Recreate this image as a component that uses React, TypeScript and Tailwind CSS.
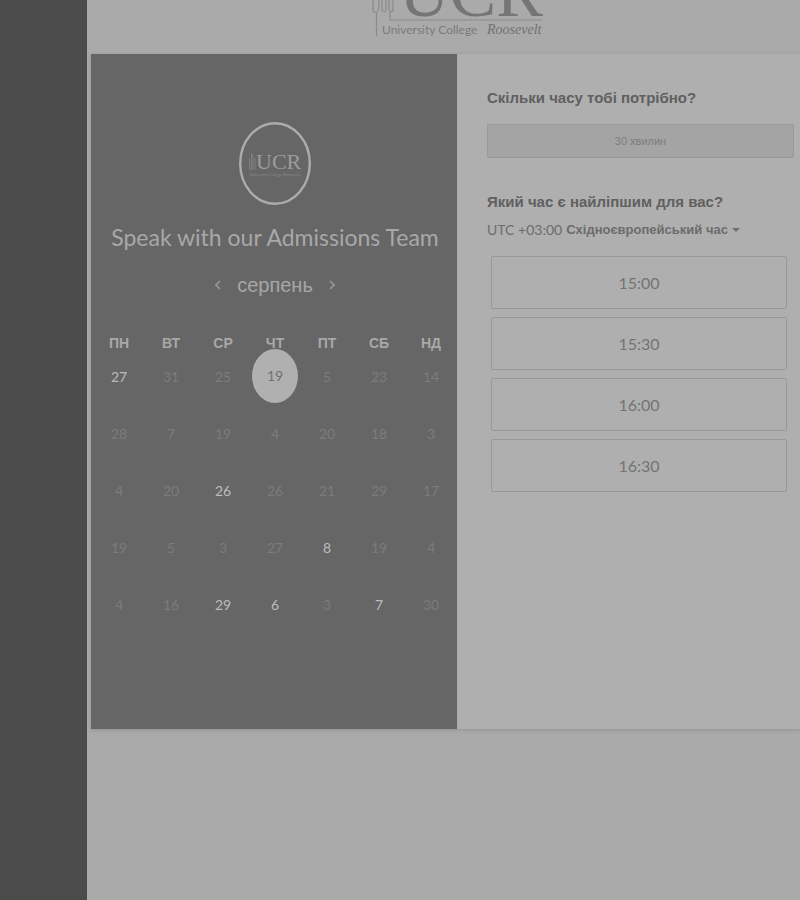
import React from "react";

const latin = "font-['Lato','Liberation_Sans',sans-serif]";
const cyrillic = "font-['Liberation_Sans',Arial,sans-serif]";

const weekdays = ["ПН", "ВТ", "СР", "ЧТ", "ПТ", "СБ", "НД"];

type Day = { n: number; state?: "open" | "selected" };

const weeks: Day[][] = [
  [{ n: 27, state: "open" }, { n: 31 }, { n: 25 }, { n: 19, state: "selected" }, { n: 5 }, { n: 23 }, { n: 14 }],
  [{ n: 28 }, { n: 7 }, { n: 19 }, { n: 4 }, { n: 20 }, { n: 18 }, { n: 3 }],
  [{ n: 4 }, { n: 20 }, { n: 26, state: "open" }, { n: 26 }, { n: 21 }, { n: 29 }, { n: 17 }],
  [{ n: 19 }, { n: 5 }, { n: 3 }, { n: 27 }, { n: 8, state: "open" }, { n: 19 }, { n: 4 }],
  [{ n: 4 }, { n: 16 }, { n: 29, state: "open" }, { n: 6, state: "open" }, { n: 3 }, { n: 7, state: "open" }, { n: 30 }],
];

const slots = ["15:00", "15:30", "16:00", "16:30"];

function HeaderLogo() {
  return (
    <svg width="176" height="53" viewBox="0 0 176 53" role="img" aria-label="University College Roosevelt">
      <g fill="none" stroke="#8a8a8a" strokeWidth="1.2">
        <path d="M5.5 36V13M2 0V10Q2 13 6 12Q8 11 8 0M11 0V10Q14 14 15 10V0M18 0V9Q19 13 22 11V0" />
        <path d="M19 12V20H171" />
      </g>
      <text x="28" y="16" fontSize="70" fill="#757575" fontFamily="'Liberation Serif', serif">UCR</text>
      <text x="11" y="34" fontSize="12" fill="#7b7b7b" fontFamily="Lato, sans-serif">University College</text>
      <text x="116" y="34" fontSize="14" fill="#707070" fontStyle="italic" fontFamily="'Liberation Serif', serif">Roosevelt</text>
    </svg>
  );
}

function Emblem() {
  return (
    <svg width="72" height="83" viewBox="0 0 72 83" role="img" aria-label="UCR" className="mx-auto block">
      <ellipse cx="36" cy="41.5" rx="34.8" ry="40.3" fill="none" stroke="#acacac" strokeWidth="2.4" />
      <path d="M10.500 48V36M12.500 48V31L14 35V48M16 48V36" fill="none" stroke="#7e7e7e" />
      <text x="17" y="47" fontSize="22" fill="#9c9c9c" fontFamily="'Liberation Serif', serif">UCR</text>
      <text x="11" y="54" fontSize="4" fill="#8a8a8a" fontFamily="Lato, sans-serif">University College Roosevelt</text>
    </svg>
  );
}

function Chevron({ d }: { d: string }) {
  return (
    <svg width="6" height="12" viewBox="0 0 6 12" fill="none" stroke="#979797" strokeWidth="1.6" aria-hidden="true">
      <path d={d} />
    </svg>
  );
}

function DayButton({ day }: { day: Day }) {
  if (day.state === "selected") {
    return (
      <button aria-pressed="true" className="mx-auto block h-[54px] w-[46px] rounded-[50%] bg-[#b0b0b0] text-[#707070]">
        {day.n}
      </button>
    );
  }
  if (day.state === "open") {
    return <button className="h-14 w-full text-[#bcbcbc]">{day.n}</button>;
  }
  return (
    <button disabled className="h-14 w-full text-[#7c7c7c]">
      {day.n}
    </button>
  );
}

function CalendarPanel() {
  return (
    <section className="w-[366px] shrink-0 bg-[#666666] pt-[68px] pb-10 pl-[2px]">
      <Emblem />
      <h1 className={`${latin} mt-4 text-center text-[23px] leading-8 whitespace-nowrap text-[#a8a8a8]`}>
        Speak with our Admissions Team
      </h1>
      <div className="mt-4 flex h-8 items-center justify-center gap-4">
        <button aria-label="Попередній місяць">
          <Chevron d="M5 2L1 6L5 10" />
        </button>
        <h2 className={`${cyrillic} text-xl leading-8 text-[#a6a6a6]`}>серпень</h2>
        <button aria-label="Наступний місяць">
          <Chevron d="M1 2L5 6L1 10" />
        </button>
      </div>
      <table className="mt-7 w-full table-fixed border-collapse text-center">
        <thead>
          <tr className={`${cyrillic} h-5 text-sm text-[#a8a8a8]`}>
            {weekdays.map((name) => (
              <th key={name} scope="col" className="p-0 pt-2 leading-3">
                {name}
              </th>
            ))}
          </tr>
        </thead>
        <tbody className={`${latin} text-sm`}>
          {weeks.map((week, i) => (
            <tr key={i} className="h-[57px]">
              {week.map((day, j) => (
                <td key={j} className="p-0 align-top">
                  <DayButton day={day} />
                </td>
              ))}
            </tr>
          ))}
        </tbody>
      </table>
    </section>
  );
}

function TimePanel() {
  return (
    <section className="min-w-0 flex-1 bg-[#afafaf] pt-8 pr-[6px] pl-[30px]">
      <h2 className={`${cyrillic} text-[15px] leading-6 font-bold text-[#606060]`}>Скільки часу тобі потрібно?</h2>
      <button
        className={`${cyrillic} mt-[14px] block h-[34px] w-full rounded-xs border border-[#999999] bg-[#a4a4a4] text-[11px] text-[#7c7c7c]`}
      >
        30 хвилин
      </button>
      <h2 className={`${cyrillic} mt-8 text-[15px] leading-6 font-bold text-[#606060]`}>
        Який час є найліпшим для вас?
      </h2>
      <div className="mt-1 flex h-6 items-center gap-1 text-sm text-[#6c6c6c]">
        <label htmlFor="zone" className={`${latin} whitespace-nowrap`}>
          UTC +03:00
        </label>
        <select id="zone" className={`${cyrillic} appearance-none bg-transparent pr-4 text-[13px] font-bold`}>
          <option>Східноєвропейський час</option>
        </select>
        <svg width="8" height="4" viewBox="0 0 8 4" fill="#707070" className="pointer-events-none -ml-4" aria-hidden="true">
          <path d="M0 0H8L4 4Z" />
        </svg>
      </div>
      <div className="mt-[14px] mr-[7px] ml-1 flex flex-col gap-2">
        {slots.map((slot) => (
          <button key={slot} className={`${latin} h-[53px] rounded-xs border border-[#999999] text-base text-[#747474]`}>
            {slot}
          </button>
        ))}
      </div>
    </section>
  );
}

export default function App() {
  return (
    <div className="flex min-h-screen bg-[#aaaaaa]">
      <aside className="w-[87px] shrink-0 bg-[#4b4b4b]" />
      <main className="min-w-0 flex-1 pl-1">
        <header className="h-[54px] overflow-hidden pl-[280px]">
          <HeaderLogo />
        </header>
        <div className="flex min-h-[675px] shadow-[0_1px_4px_rgba(0,0,0,0.15)]">
          <CalendarPanel />
          <TimePanel />
        </div>
      </main>
    </div>
  );
}
